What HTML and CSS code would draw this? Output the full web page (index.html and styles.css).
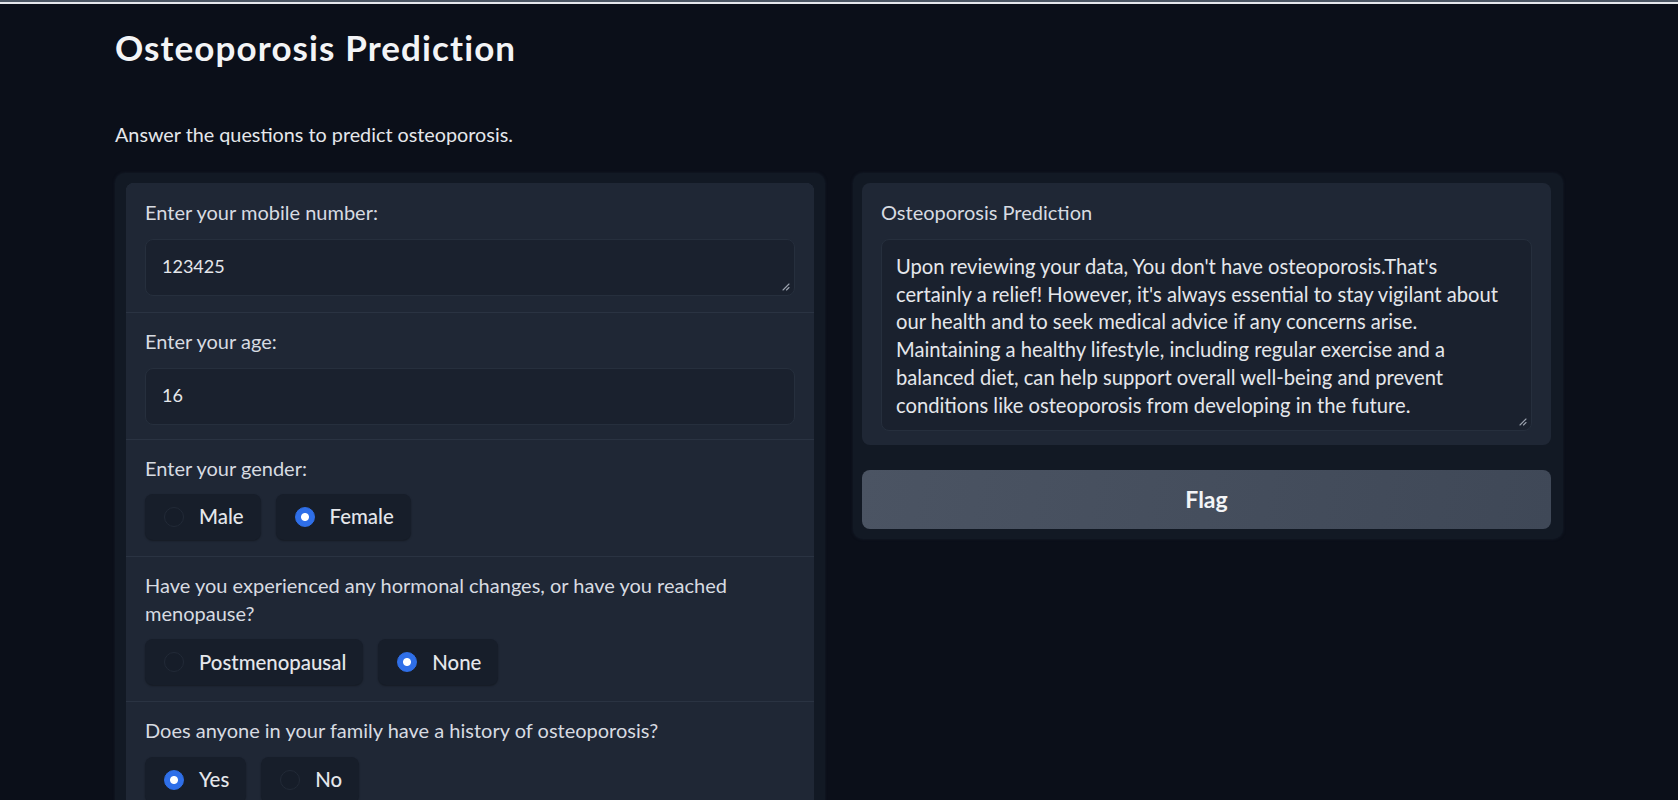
FILE: index.html
```html
<!DOCTYPE html>
<html lang="en">
<head>
<meta charset="utf-8">
<title>Osteoporosis Prediction</title>
<link rel="stylesheet" href="styles.css">
</head>
<body>
<div class="topbar"></div>
<main class="app">
  <h1 class="title">Osteoporosis Prediction</h1>
  <p class="desc">Answer the questions to predict osteoporosis.</p>
  <div class="columns">
    <section class="panel">
      <div class="form">
        <div class="field">
          <div class="label">Enter your mobile number:</div>
          <div class="input">123425<svg class="grip" width="8" height="8" viewBox="0 0 8 8"><path d="M7 1L1 7M7 4.5L4.5 7" stroke="#9ca3af" stroke-width="1.1" stroke-linecap="round"/></svg></div>
        </div>
        <div class="field">
          <div class="label">Enter your age:</div>
          <div class="input">16</div>
        </div>
        <div class="field field-radio">
          <div class="label">Enter your gender:</div>
          <div class="radios">
            <div class="radio"><span class="dot"></span>Male</div>
            <div class="radio"><span class="dot on"></span>Female</div>
          </div>
        </div>
        <div class="field field-radio">
          <div class="label">Have you experienced any hormonal changes, or have you reached<br>menopause?</div>
          <div class="radios">
            <div class="radio"><span class="dot"></span>Postmenopausal</div>
            <div class="radio"><span class="dot on"></span>None</div>
          </div>
        </div>
        <div class="field field-radio">
          <div class="label">Does anyone in your family have a history of osteoporosis?</div>
          <div class="radios">
            <div class="radio"><span class="dot on"></span>Yes</div>
            <div class="radio"><span class="dot"></span>No</div>
          </div>
        </div>
      </div>
    </section>
    <section class="panel panel-right">
      <div class="block">
        <div class="label">Osteoporosis Prediction</div>
        <div class="output">Upon reviewing your data, You don't have osteoporosis.That's<br>certainly a relief! However, it's always essential to stay vigilant about<br>our health and to seek medical advice if any concerns arise.<br>Maintaining a healthy lifestyle, including regular exercise and a<br>balanced diet, can help support overall well-being and prevent<br>conditions like osteoporosis from developing in the future.<svg class="grip" width="8" height="8" viewBox="0 0 8 8"><path d="M7 1L1 7M7 4.5L4.5 7" stroke="#9ca3af" stroke-width="1.1" stroke-linecap="round"/></svg></div>
      </div>
      <button class="flag">Flag</button>
    </section>
  </div>
</main>
</body>
</html>
```
FILE: styles.css
```css
* { box-sizing: border-box; }
html, body { margin: 0; padding: 0; }
body {
  background: #0b0f19;
  color: #e5e7eb;
  font-family: Lato, "Noto Sans", sans-serif;
  font-size: 19px;
  line-height: 27.8px;
}
.topbar {
  height: 4px;
  border-top: 2px solid #4b5563;
  border-bottom: 2px solid #e5e7eb;
}
.app {
  width: 1448px;
  margin: 0 auto;
}
.title {
  margin: 0;
  padding-top: 23px;
  font-size: 35px;
  letter-spacing: 1.1px;
  line-height: 40px;
  font-weight: 700;
  color: #f3f4f6;
}
.desc {
  margin: 55px 0 0 0;
  font-size: 19.8px;
  line-height: 24px;
  color: #e5e7eb;
}
.columns {
  margin-top: 27px;
  display: grid;
  grid-template-columns: 1fr 1fr;
  gap: 28px;
  align-items: start;
}
.panel {
  background: #121924;
  border-radius: 10px;
  padding: 10px 11px 10px;
  box-shadow: 0 0 3px rgba(30,40,55,0.6);
}
.panel-right { padding-left: 9px; padding-right: 12px; }
.form {
  background: #2a3342;
  border-radius: 8px;
  display: flex;
  flex-direction: column;
  gap: 1px;
  overflow: hidden;
}
.field, .block {
  background: #1f2735;
  padding: 14.5px 19px 14.5px;
}
.field:first-child { padding-top: 16px; padding-bottom: 16.5px; }
.field-radio { padding-bottom: 16px; }
.block { border-radius: 8px; padding-top: 16px; padding-bottom: 14px; }
.label {
  color: #d7dbe1;
  font-size: 20px;
  margin-bottom: 12px;
}
.input {
  position: relative;
  height: 57px;
  display: flex;
  align-items: center;
  padding: 0 16px;
  background: #1a212e;
  border: 1px solid #262f3d;
  border-radius: 8px;
  color: #e5e7eb;
  font-size: 18px;
}
.grip {
  position: absolute;
  right: 4px;
  bottom: 4px;
}
.radios {
  display: flex;
  gap: 15px;
  margin-top: 3.5px;
}
.radio {
  height: 46px;
  display: flex;
  align-items: center;
  gap: 15px;
  padding: 0 17px 0 19px;
  background: #171e2a;
  border-radius: 8px;
  box-shadow: 0 1px 2px rgba(0,0,0,0.35);
  font-size: 20.4px;
  font-weight: 500;
  color: #e5e7eb;
}
.dot {
  flex: none;
  width: 20px;
  height: 20px;
  border-radius: 50%;
  background: #161d29;
  border: 1px solid #222a37;
}
.dot.on {
  background: radial-gradient(circle, #ffffff 0 3.5px, #2f6fe8 4.5px);
  border-color: #2f6fe8;
}
.output {
  position: relative;
  height: 192px;
  padding: 13px 14px 11px;
  background: #1a212e;
  border: 1px solid #262f3d;
  border-radius: 8px;
  color: #e5e7eb;
  font-size: 20.2px;
  white-space: nowrap;
}
.flag {
  display: block;
  width: 100%;
  height: 59px;
  margin-top: 25px;
  border: none;
  border-radius: 8px;
  background: linear-gradient(100deg, #4b5463, #3f4857);
  color: #f3f4f6;
  font-family: inherit;
  font-size: 23px;
  font-weight: 700;
}
```
